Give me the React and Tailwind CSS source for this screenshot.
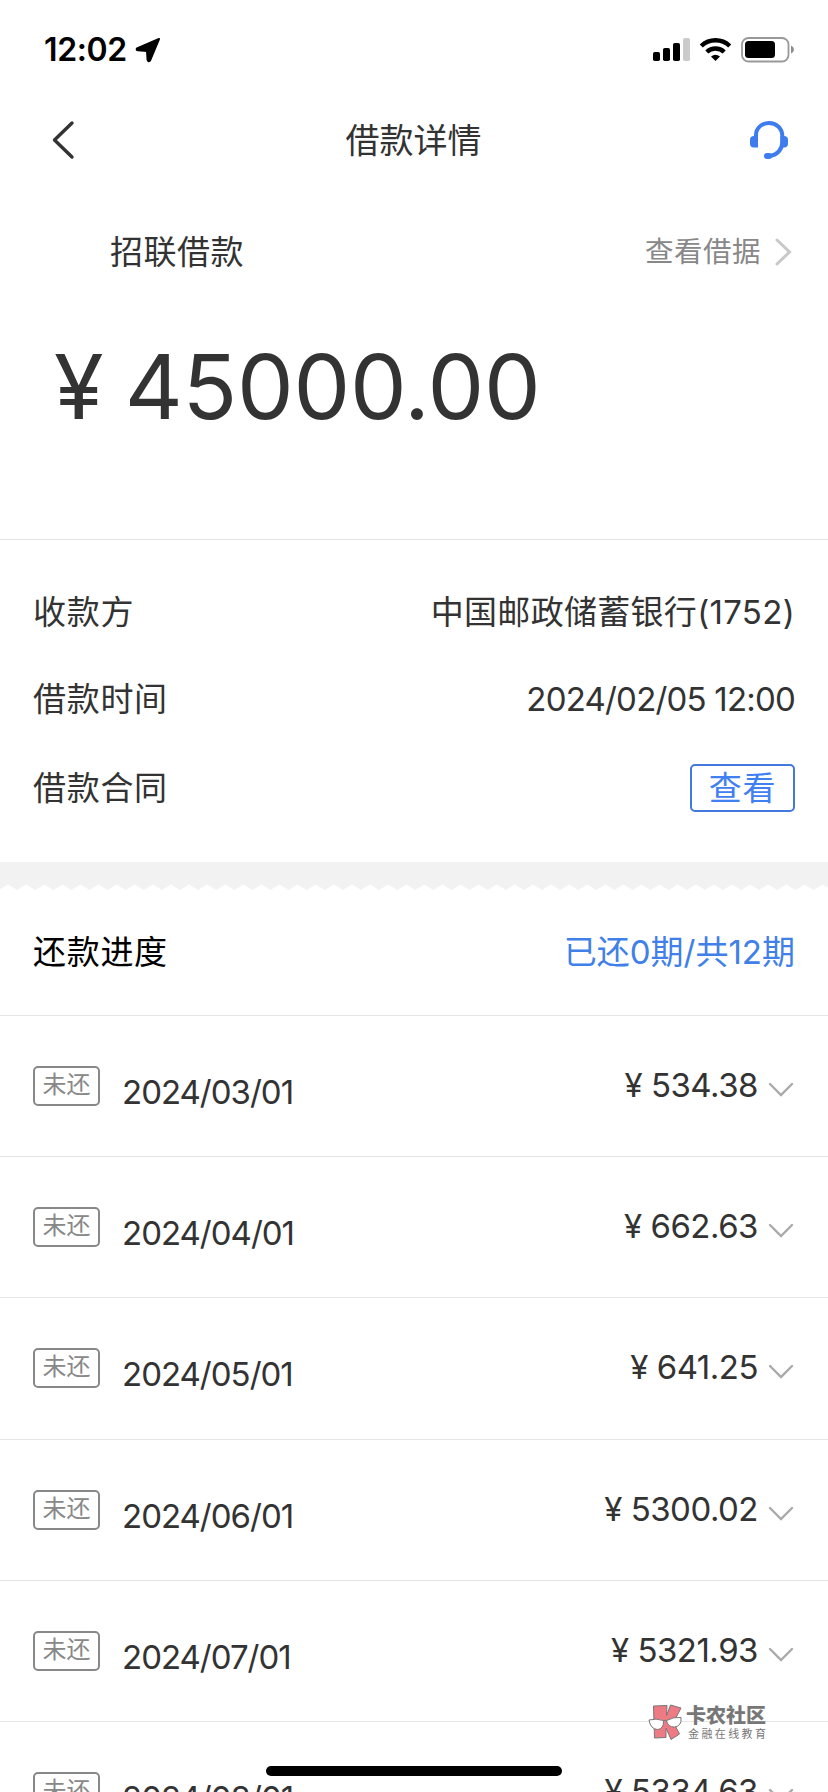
import React from 'react';

const payments = [
  { date: '2024/03/01', amount: '534.38' },
  { date: '2024/04/01', amount: '662.63' },
  { date: '2024/05/01', amount: '641.25' },
  { date: '2024/06/01', amount: '5300.02' },
  { date: '2024/07/01', amount: '5321.93' },
  { date: '2024/08/01', amount: '5334.63' },
];

function StatusBar() {
  return (
    <div className="flex h-[100px] items-center pl-[44px] pr-[34px]">
      <span className="text-[32px] leading-8 font-semibold tracking-[-0.4px] text-black">12:02</span>
      <svg className="ml-[8px] h-[26px] w-[26px]" viewBox="0 0 26 26">
        <path d="M24 2 L2 11.4 Q1 13 3 13.3 L12 14 L12.600 23 Q13.300 25.200 15 23.500 Z" stroke="#000" strokeWidth="2" strokeLinejoin="round" />
      </svg>
      <svg className="ml-auto h-[26px] w-[142px]" viewBox="652 37 142 26">
        <rect x="653" y="52" width="7" height="9" rx="1.800" />
        <rect x="663" y="48" width="7" height="13" rx="1.800" />
        <rect x="673" y="43" width="7" height="18" rx="1.800" />
        <rect x="683" y="38" width="7" height="23" rx="1.800" fill="#cbcbcb" />
        <g fill="none" stroke="#000" strokeWidth="4.400">
          <path d="M701.300 46 A20.500 20.500 0 0 1 729.700 46" />
          <path d="M706.800 52 A12.500 12.500 0 0 1 724.200 52" />
        </g>
        <path d="M715.500 61 L711 56.600 Q715.500 53 720 56.600 Z" />
        <rect x="742" y="38" width="46.500" height="23.500" rx="6.500" fill="none" stroke="#999" strokeWidth="1.800" />
        <rect x="745" y="41" width="30" height="17" rx="3.500" />
        <path d="M791 45.500 Q794 47 794 49.500 Q794 52 791 53.500 Z" fill="#8c8c8c" />
      </svg>
    </div>
  );
}

function NavBar() {
  return (
    <div className="flex h-[80px] items-center justify-between pl-[50px] pr-[39px]">
      <svg className="h-[40px] w-[28px]" viewBox="0 0 28 40">
        <path d="M22 3 L4.500 20 L22 37" fill="none" stroke="#333" strokeWidth="3.400" strokeLinecap="round" strokeLinejoin="round" />
      </svg>
      <h1 className="pt-[2px] text-[34px] leading-[34px] font-normal">借款详情</h1>
      <svg className="h-[40px] w-[40px]" viewBox="749 120 40 40">
        <g fill="none" stroke="#3d7bee" strokeLinecap="round">
          <path d="M756 136 V135 C756 128 762 123 769 123 C776 123 782.300 128 782.300 136 V142 C782.300 149 777.500 155.500 769 156" strokeWidth="4" />
          <path d="M767 156 H769" strokeWidth="6" />
        </g>
        <path d="M758 136 V147.500 H753.500 Q750 147.500 750 143.500 V140 Q750 136 754 136 Z" fill="#3d7bee" />
        <path d="M780.500 136 H784 Q788 136 788 140 V143.500 Q788 147.500 784 147.500 H780.500 Z" fill="#3d7bee" />
      </svg>
    </div>
  );
}

function Summary() {
  return (
    <section className="h-[360px] border-b border-[#e6e6e6]">
      <div className="flex h-[144px] items-center justify-between pl-[110px] pr-[36px]">
        <span className="text-[33px] leading-[34px] tracking-[0.5px]">招联借款</span>
        <span className="flex items-center gap-[14px] text-[28.5px] leading-[30px] tracking-[0.5px] text-[#888]">
          查看借据
          <svg className="h-[28px] w-[17px]" viewBox="0 0 17 28">
            <path d="M2 2 L14.500 14 L2 26" fill="none" stroke="#c8c8c8" strokeWidth="3" strokeLinecap="round" />
          </svg>
        </span>
      </div>
      <div className="mt-[13px] pl-[54px] text-[90px] leading-[100px] tracking-[-0.3px] whitespace-pre [word-spacing:-3.5px]">¥ 45000.00</div>
    </section>
  );
}

function Details() {
  return (
    <section className="flex h-[322px] flex-col pt-[28px] pr-[33px] pl-[33px] text-[33px] leading-[36px]">
      <div className="flex h-[87px] items-center justify-between">
        <span className="tracking-[0.7px]">收款方</span>
        <span className="tracking-[0.3px]">中国邮政储蓄银行(1752)</span>
      </div>
      <div className="flex h-[87px] items-center justify-between">
        <span className="tracking-[0.7px]">借款时间</span>
        <span className="tracking-[-0.8px]">2024/02/05 12:00</span>
      </div>
      <div className="flex h-[91px] items-center justify-between">
        <span className="tracking-[0.7px]">借款合同</span>
        <button className="flex h-[48px] w-[105px] items-center justify-center rounded-[5px] border-2 border-[#4379dc] tracking-[0.7px] text-[#4080f0]">查看</button>
      </div>
    </section>
  );
}

function TornEdge() {
  return (
    <svg className="block h-[29px] w-full" viewBox="0 0 828 29">
      <defs>
        <pattern id="teeth" x="-1" y="0" width="18.100" height="29" patternUnits="userSpaceOnUse">
          <path d="M0 0 H18.100 V28 L9.050 22.500 L0 28 Z" fill="#f2f2f2" />
        </pattern>
      </defs>
      <rect width="828" height="29" fill="url(#teeth)" />
      <rect width="828" height="22" fill="#f2f2f2" />
    </svg>
  );
}

function PaymentRow({ date, amount }) {
  return (
    <li className="flex h-[141.2px] items-start border-b border-[#e6e6e6] pr-[34px] pl-[33px]">
      <span className="mt-[50px] flex h-[40px] w-[67px] items-start justify-center rounded-[5px] border-2 border-[#888] pt-[4px] text-[24px] leading-[26px] text-[#888]">未还</span>
      <span className="mt-[58px] ml-[22px] text-[33px] leading-[36px] tracking-[-1px]">{date}</span>
      <span className="mt-[51px] ml-auto text-[33px] leading-[36px] tracking-[-0.5px]">¥ {amount}</span>
      <svg className="mt-[66px] ml-[10px] h-[16px] w-[26px]" viewBox="0 0 26 16">
        <path d="M2 2 L13 13 L24 2" fill="none" stroke="#aaa" strokeWidth="2.400" strokeLinecap="round" />
      </svg>
    </li>
  );
}

function Watermark() {
  return (
    <div className="absolute top-[1703px] left-[648px] flex items-start">
      <svg className="h-[38px] w-[36px]" viewBox="0 0 36 38">
        <g stroke="#777" strokeWidth="1" strokeLinejoin="round">
          <path d="M5.500 3 L19 2.500 L18.500 12.500 L22.500 2 L33 5 L25.500 19.500 L31.500 31 L23 36.500 L18 25 V34.500 L6.500 35 Z" fill="#ee7b83" />
          <path d="M1 17 Q8 15 15.500 17.500 Q16 26 9.500 26.500 Q2.500 26 1 17 Z" fill="#fff" />
          <path d="M18.500 17.500 Q26 13.500 33 14.500 Q34 23 26.500 24 Q20 24.500 18.500 17.500 Z" fill="#fff" />
          <path d="M15.500 18 Q17 16.500 18.500 17.500" fill="none" />
        </g>
      </svg>
      <div className="flex flex-col pt-[3px] pl-[2px] text-[#777]">
        <span className="text-[20px] leading-[20px] font-black">卡农社区</span>
        <span className="pt-[2px] pl-[2px] text-[11px] leading-[12px] tracking-[2.4px]">金融在线教育</span>
      </div>
    </div>
  );
}

export default function App() {
  return (
    <div className="relative h-[1792px] w-full overflow-hidden bg-white font-[Inter,'Noto_Sans_CJK_SC',sans-serif] text-[#333]">
      <StatusBar />
      <NavBar />
      <Summary />
      <Details />
      <TornEdge />
      <div className="flex h-[125px] items-center justify-between border-b border-[#e6e6e6] pr-[33px] pb-[2px] pl-[33px] text-[33px] leading-[36px]">
        <h2 className="font-normal tracking-[0.7px] text-black">还款进度</h2>
        <span className="text-[#4080e8]">已还0期/共12期</span>
      </div>
      <ul>
        {payments.map((p) => (
          <PaymentRow key={p.date} {...p} />
        ))}
      </ul>
      <Watermark />
      <div className="absolute bottom-[16px] left-[266px] h-[10px] w-[296px] rounded-full bg-black" />
    </div>
  );
}
